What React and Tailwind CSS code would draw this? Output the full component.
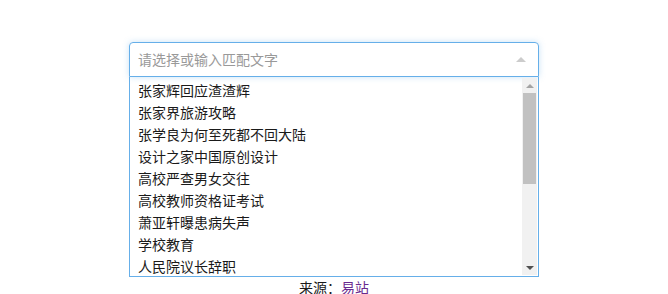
import React from "react";

const items = [
  "张家辉回应渣渣辉",
  "张家界旅游攻略",
  "张学良为何至死都不回大陆",
  "设计之家中国原创设计",
  "高校严查男女交往",
  "高校教师资格证考试",
  "萧亚轩曝患病失声",
  "学校教育",
  "人民院议长辞职",
  "人民日报评论",
];

const font = { fontFamily: '"Noto Sans CJK SC", "Noto Sans", sans-serif' };

export default function App() {
  return (
    <div className="w-[668px] h-[294px] bg-white overflow-hidden" style={font}>
      <div className="pt-[42px] flex flex-col items-center">
        <div className="w-[410px]">
          <div className="h-[35px] border border-[#66afe9] rounded-t-[4px] flex items-center justify-between pl-[8px] pr-[12px] shadow-[0_0_6px_rgba(102,175,233,0.35)]">
            <span className="text-[14px] text-[#999]">请选择或输入匹配文字</span>
            <span className="w-0 h-0 border-l-[5px] border-r-[5px] border-b-[5px] border-l-transparent border-r-transparent border-b-[#ccc]"></span>
          </div>
          <div className="h-[200px] border border-t-0 border-[#66afe9] flex overflow-hidden">
            <ul className="flex-1 pt-[2px] overflow-hidden">
              {items.map((t) => (
                <li key={t} className="h-[22px] leading-[22px] pl-[8px] text-[14px] text-[#1a1a1a]">
                  {t}
                </li>
              ))}
            </ul>
            <div className="w-[15px] my-[1px] mr-[1px] bg-[#f1f1f1] flex flex-col">
              <div className="h-[15px] flex items-center justify-center">
                <span className="w-0 h-0 border-l-[4px] border-r-[4px] border-b-[4px] border-l-transparent border-r-transparent border-b-[#a3a3a3]"></span>
              </div>
              <div className="h-[91px] mx-[1px] bg-[#c1c1c1]"></div>
              <div className="flex-1"></div>
              <div className="h-[15px] flex items-center justify-center">
                <span className="w-0 h-0 border-l-[4px] border-r-[4px] border-t-[4px] border-l-transparent border-r-transparent border-t-[#505050]"></span>
              </div>
            </div>
          </div>
        </div>
        <p className="text-[14px] leading-[20px] text-[#1a1a1a]">
          来源：<a href="#" className="text-[#6a2a8f]">易站</a>
        </p>
      </div>
    </div>
  );
}
